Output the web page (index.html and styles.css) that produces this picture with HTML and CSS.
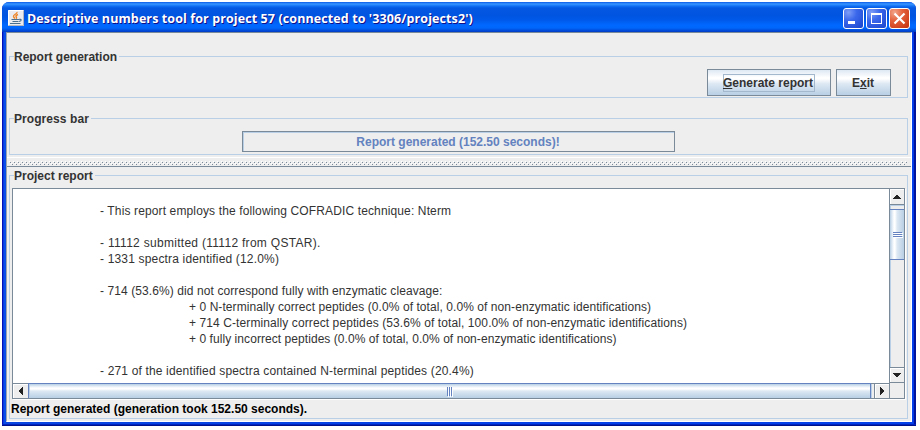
FILE: index.html
```html
<!DOCTYPE html>
<html lang="en">
<head>
<meta charset="utf-8">
<title>Descriptive numbers tool</title>
<link rel="stylesheet" href="styles.css">
</head>
<body>
<div class="window">
  <header class="titlebar">
    <svg class="java" width="16" height="16" viewBox="0 0 16 16">
      <rect width="16" height="16" rx="1" fill="#e9ebee"/>
      <path d="M.5 15.5V.5h15" fill="none" stroke="#fff"/>
      <path d="M.5 15.5h15V.5" fill="none" stroke="#b3b6bc"/>
      <path d="M9 2C9.500 4 5 4.500 5.500 6.500Q5.800 7.500 7 8.500M10 4.500Q7 5.500 8.300 7Q9 8 8 8.700" fill="none" stroke="#ee8322" stroke-width="1.4"/>
      <path d="M3.500 9.500h7M4.500 11.500h6M2 13.500h10.500M10.500 9.500c3.500-1 3.500 1.500.5 2" fill="none" stroke="#4c718f" stroke-width="1.2"/>
    </svg>
    <h1 class="title">Descriptive numbers tool for project 57 (connected to '3306/projects2')</h1>
    <div class="controls">
      <svg class="ctl" width="21" height="21" viewBox="0 0 21 21">
        <defs>
          <radialGradient id="blue" cx=".25" cy=".2" r="1"><stop offset="0" stop-color="#7e9df6"/><stop offset=".4" stop-color="#3c69ec"/><stop offset="1" stop-color="#1c48cf"/></radialGradient>
          <radialGradient id="red" cx=".25" cy=".2" r="1"><stop offset="0" stop-color="#f2a58b"/><stop offset=".4" stop-color="#e4633d"/><stop offset="1" stop-color="#c73410"/></radialGradient>
        </defs>
        <rect x=".5" y=".5" width="20" height="20" rx="2.500" fill="url(#blue)" stroke="#fff"/>
        <path d="M5 13h7v3H5z" fill="#fff"/>
      </svg>
      <svg class="ctl" width="21" height="21" viewBox="0 0 21 21">
        <rect x=".5" y=".5" width="20" height="20" rx="2.500" fill="url(#blue)" stroke="#fff"/>
        <path d="M5 5h11v11H5zM6 7v8h9V7z" fill="#fff" fill-rule="evenodd"/>
      </svg>
      <svg class="ctl" width="21" height="21" viewBox="0 0 21 21">
        <rect x=".5" y=".5" width="20" height="20" rx="2.500" fill="url(#red)" stroke="#fff"/>
        <path d="M5.500 5.500l10 10M15.500 5.500l-10 10" stroke="#fff" stroke-width="2.2"/>
      </svg>
    </div>
  </header>
  <main class="content">
    <section class="group generation">
      <h2 class="legend l-generation">Report generation</h2>
      <button class="btn generate"><span class="focus"><u>G</u>enerate report</span></button>
      <button class="btn exit"><span>E<u>x</u>it</span></button>
    </section>
    <section class="group progress">
      <h2 class="legend l-progress">Progress bar</h2>
      <div class="bar"><span>Report generated (152.50 seconds)!</span></div>
    </section>
    <div class="divider">
      <svg class="bumps" width="898" height="4">
        <defs><pattern id="bump" width="4" height="4" patternUnits="userSpaceOnUse"><path d="M0 0h1v1H0zM2 2h1v1H2z" fill="#fff"/><path d="M1 1h1v1H1zM3 3h1v1H3z" fill="#7a8a99"/></pattern></defs>
        <rect width="898" height="4" fill="url(#bump)"/>
      </svg>
    </div>
    <section class="group report">
      <h2 class="legend l-report">Project report</h2>
      <div class="scrollpane">
        <div class="text">
          <p class="a">- This report employs the following COFRADIC technique: Nterm</p>
          <p></p>
          <p class="b">- 11112 submitted (11112 from QSTAR).</p>
          <p class="c">- 1331 spectra identified (12.0%)</p>
          <p></p>
          <p class="d">- 714 (53.6%) did not correspond fully with enzymatic cleavage:</p>
          <p class="sub e">+ 0 N-terminally correct peptides (0.0% of total, 0.0% of non-enzymatic identifications)</p>
          <p class="sub f">+ 714 C-terminally correct peptides (53.6% of total, 100.0% of non-enzymatic identifications)</p>
          <p class="sub g">+ 0 fully incorrect peptides (0.0% of total, 0.0% of non-enzymatic identifications)</p>
          <p></p>
          <p class="h">- 271 of the identified spectra contained N-terminal peptides (20.4%)</p>
        </div>
        <div class="vbar">
          <div class="arrow up"><svg width="8" height="4"><path d="M3 0h2v1h1v1h1v1h1v1H0V3h1V2h1V1h1z" fill="#222"/></svg></div>
          <div class="vtrack"><div class="vthumb"><i></i><i></i><i></i></div></div>
          <div class="arrow down"><svg width="8" height="4"><path d="M0 0h8v1H7v1H6v1H5v1H3V3H2V2H1V1H0z" fill="#222"/></svg></div>
        </div>
        <div class="hbar">
          <div class="arrow left"><svg width="4" height="8"><path d="M4 0v8H3V7H2V6H1V5H0V3h1V2h1V1h1V0z" fill="#222"/></svg></div>
          <div class="hthumb"><i></i><i></i><i></i></div>
          <div class="hrest"></div>
          <div class="arrow right"><svg width="4" height="8"><path d="M0 0v8h1V7h1V6h1V5h1V3H3V2H2V1H1V0z" fill="#222"/></svg></div>
        </div>
        <div class="corner"></div>
      </div>
      <div class="status">Report generated (generation took 152.50 seconds).</div>
    </section>
  </main>
</div>
</body>
</html>
```
FILE: styles.css
```css
* { box-sizing: border-box; }
body { margin: 0; padding: 2px; background: #fff; overflow: hidden; font: 12px/16px "Liberation Sans", Arial, sans-serif; color: #333; }
h1, h2, p { margin: 0; }
.window {
  width: 914px; height: 424px; padding: 0 4px 4px; border-radius: 7px 7px 0 0; overflow: hidden;
  background: linear-gradient(90deg, #0010b8 0, #0010b8 1px, #0831d9 1px, #0855f0 3px, #0a46e0 4px, #0441e8 50%, #0441e8 910px, #0441f0 911px, #0030d8 912px, #00139a 912px);
  box-shadow: inset 0 -1px #00138c, inset 0 -2px #0023c0;
}
.titlebar {
  height: 30px; margin: 0 -4px; padding: 2px 6px 0 6px; display: flex; align-items: center;
  background: linear-gradient(#0a5be8 0, #3a96ff 2px, #1272f5 4px, #0458e2 6px, #0054df 13px, #0059ea 18px, #0068ff 23px, #0067fc 26px, #0050df 28px, #003bc4 30px);
}
.java { flex: none; margin-right: 3px; }
.title { font: bold 12.5px/20px "Open Sans", sans-serif; color: #fff; text-shadow: 1px 1px #0f1089; white-space: nowrap; flex: 1; padding-top: 2px; letter-spacing: .1px; }
.controls { display: flex; gap: 2px; }
.ctl { display: block; }
.content { height: 390px; background: #eee; border-top: 1px solid #7a8a99; border-left: 1px solid #9aa5ae; border-right: 1px solid #fff; border-bottom: 1px solid #fff; padding: 23px 3px 0 2px; display: flex; flex-direction: column; }
.group { border: 1px solid #b8cfe5; flex: none; }
.legend { font: bold 12px/14px "Liberation Sans", sans-serif; background: #eee; width: max-content; margin: -7px 0 0 4px; padding: 0 2px 0 0; white-space: nowrap; }
.l-generation { letter-spacing: -.02px; }
.l-progress { letter-spacing: .07px; }
.generation { height: 42px; display: grid; grid-template-columns: 1fr 124px 55px; column-gap: 5px; padding-right: 16px; }
.generation .legend { height: 14px; }
.btn { height: 27px; margin-top: 12px; padding: 0 1px 0 0; border: 1px solid #7a8a99; border-radius: 0; background: linear-gradient(#dde8f3 0, #fff 30%, #fff 35%, #dde8f3 55%, #b8cfe5 100%); font: bold 12px/16px "Liberation Sans", sans-serif; color: #333; display: flex; align-items: center; justify-content: center; white-space: nowrap; }
.btn u { text-underline-offset: 1px; }
.focus { border: 1px solid #a3b8cc; height: 18px; width: 92px; line-height: 16px; text-indent: -1px; }
.progress { height: 37px; margin-top: 20px; display: flex; flex-direction: column; }
.bar { width: 433px; height: 21px; margin: 5px 0 0 232px; padding-right: 1px; border: 1px solid #7a8a99; box-shadow: inset 1px 1px #b8cfe5; color: #6382bf; font-weight: bold; line-height: 20px; text-align: center; white-space: nowrap; }
.divider { margin: 2px -3px 0 -2px; border-top: 1px solid #fff; border-bottom: 1px solid #7a8a99; padding: 3px 3px 0 2px; height: 10px; }
.bumps { display: block; }
.report { height: 244px; margin-top: 8px; }
.scrollpane { width: 893px; height: 211px; margin: 5px 0 0 2px; border: 1px solid #7a8a99; display: grid; grid-template-columns: 876px 15px; grid-template-rows: 194px 15px; box-shadow: 1px 1px #fff; }
.text { background: #fff; padding: 14px 0 0 87px; overflow: hidden; }
.text p { height: 16px; white-space: nowrap; }
.text .sub { padding-left: 89px; }
.a { letter-spacing: .13px; }
.b { letter-spacing: .29px; }
.c { letter-spacing: .17px; }
.d { letter-spacing: .09px; }
.e { letter-spacing: .07px; }
.f { letter-spacing: .095px; }
.g { letter-spacing: .06px; }
.h { letter-spacing: .16px; }
.vbar { border-left: 1px solid #7a8a99; display: flex; flex-direction: column; }
.arrow { display: flex; align-items: center; justify-content: center; flex: none; box-shadow: inset 1px 1px #fff; }
.up { height: 16px; border-bottom: 1px solid #7a8a99; }
.down { height: 16px; border-top: 1px solid #7a8a99; border-bottom: 1px solid #7a8a99; }
.vtrack { flex: 1; padding-top: 4px; box-shadow: inset 1px 1px #b8cfe5; }
.vthumb { height: 51px; border: solid #6382bf; border-width: 1px 0; background: linear-gradient(90deg, #b8cfe5 0, #dde8f3 2px, #fff 4px, #fff 5px, #dde8f3 7px, #b8cfe5 14px); display: flex; flex-direction: column; align-items: center; justify-content: center; gap: 1px; }
.vthumb i { width: 9px; height: 1px; background: #6382bf; box-shadow: 1px 1px #fff; }
.hbar { border-top: 1px solid #7a8a99; display: flex; }
.left { width: 15px; }
.hthumb { width: 843px; border: 1px solid #6382bf; border-width: 0 1px; box-shadow: 0 -1px #6382bf, inset 1px 0 #b8cfe5; background: linear-gradient(#b8cfe5 0, #dde8f3 2px, #fff 4px, #fff 5px, #dde8f3 7px, #b8cfe5 14px); display: flex; align-items: center; justify-content: center; gap: 1px; }
.hthumb i { width: 1px; height: 9px; background: #6382bf; box-shadow: 1px 1px #fff; }
.hrest { width: 3px; border-left: 1px solid #b8cfe5; }
.right { width: 15px; border-left: 1px solid #7a8a99; }
.corner { border-left: 1px solid #7a8a99; }
.status { font-weight: bold; color: #000; margin: 2px 0 0 1px; white-space: nowrap; }
```
